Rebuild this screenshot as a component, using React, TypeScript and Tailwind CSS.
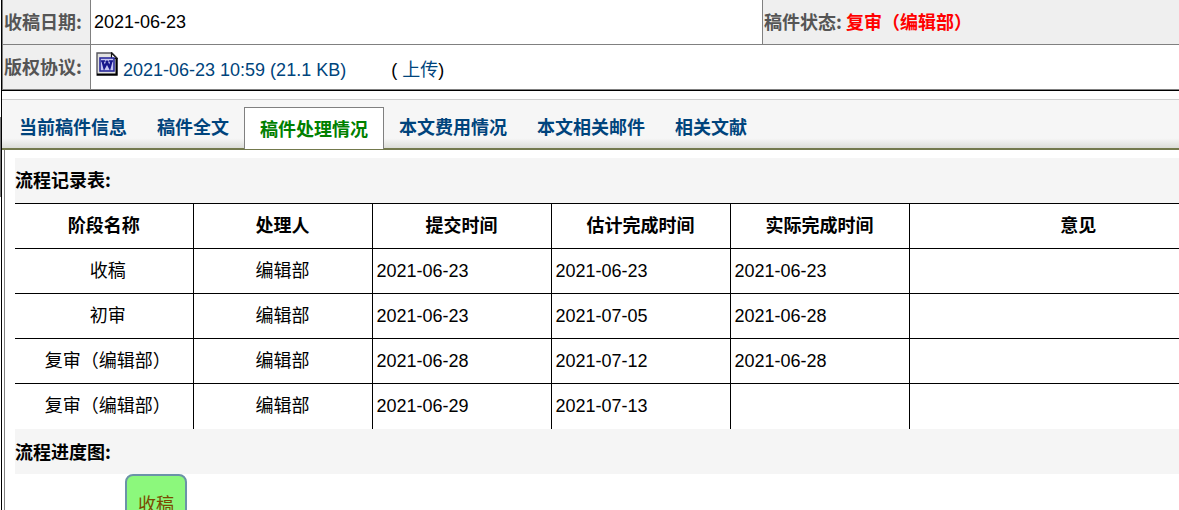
import { useState } from "react";
import clsx from "clsx";

const tabs = ["当前稿件信息", "稿件全文", "稿件处理情况", "本文费用情况", "本文相关邮件", "相关文献"];

const columns = ["阶段名称", "处理人", "提交时间", "估计完成时间", "实际完成时间", "意见"];

const records = [
  { stage: "收稿", handler: "编辑部", submitted: "2021-06-23", estimated: "2021-06-23", finished: "2021-06-23" },
  { stage: "初审", handler: "编辑部", submitted: "2021-06-23", estimated: "2021-07-05", finished: "2021-06-28" },
  { stage: "复审（编辑部）", handler: "编辑部", submitted: "2021-06-28", estimated: "2021-07-12", finished: "2021-06-28" },
  { stage: "复审（编辑部）", handler: "编辑部", submitted: "2021-06-29", estimated: "2021-07-13", finished: "" },
];

function WordIcon() {
  return (
    <svg className="w-[22px] h-6 shrink-0" viewBox="0 0 22 24" aria-hidden="true">
      <path d="M1 1h15l5 5v17H1z" fill="#e2e2e2" stroke="#55555c" strokeWidth="1.4" />
      <path d="M20.500 6v16.500H1" fill="none" stroke="#000" strokeWidth="2" />
      <path d="M15.500 1v5.500H21z" fill="#fff" stroke="#111" strokeWidth="1.2" />
      <rect x="4" y="6" width="14" height="13" fill="#c6c6f2" stroke="#2a2a9c" strokeWidth="1.6" />
      <path d="M6.500 9l1.800 6.500L11 10.500l2.700 5L15.500 9" fill="none" stroke="#17178c" strokeWidth="2.4" />
      <path d="M5 9h4M9.500 9.500h3M13 9h4" stroke="#17178c" strokeWidth="1.6" />
    </svg>
  );
}

function SectionTitle({ children }: { children: string }) {
  return (
    <h2 className="h-[45px] flex items-center pb-[2px] bg-[#f5f5f5] font-['Noto_Sans_CJK_SC',sans-serif] font-bold">
      {children}
    </h2>
  );
}

function ManuscriptInfo() {
  const label =
    "w-[88px] pl-px pb-[2px] text-left bg-[#efefef] text-[#555] font-['Noto_Sans_CJK_SC',sans-serif] font-bold whitespace-nowrap";

  return (
    <div className="border-b border-black">
      <table className="w-full table-fixed border-collapse border-l border-b border-[#808080]">
        <tbody>
          <tr className="h-11 border-b border-[#808080]">
            <th scope="row" className={label}>收稿日期:</th>
            <td className="w-[672px] pl-[3px] border-x border-[#808080]">2021-06-23</td>
            <td className="pl-px pb-[2px] bg-[#efefef] text-[#555] font-['Noto_Sans_CJK_SC',sans-serif] font-bold whitespace-nowrap">
              稿件状态: <span className="text-[#f00]">复审（编辑部）</span>
            </td>
          </tr>
          <tr className="h-[45px]">
            <th scope="row" className={label}>版权协议:</th>
            <td colSpan={2} className="pl-[5px] border-l border-[#808080]">
              <div className="flex items-start">
                <WordIcon />
                <a href="#agreement" className="ml-[5px] mt-[6px] text-[#00447c]">
                  2021-06-23 10:59 (21.1 KB)
                </a>
                <span className="ml-[45px] mt-[6px]">
                  ( <a href="#upload" className="text-[#00447c]">上传</a>)
                </span>
              </div>
            </td>
          </tr>
        </tbody>
      </table>
    </div>
  );
}

function ProcessTable() {
  const cell = "border-l border-black";

  return (
    <table className="w-full table-fixed border-collapse">
      <thead>
        <tr className="h-[45px] border-t border-black">
          {columns.map((name, i) => (
            <th
              key={name}
              scope="col"
              className={clsx(
                "pb-1 font-['Noto_Sans_CJK_SC',sans-serif] font-bold",
                i > 0 && cell,
                i === 0 && "w-[178px]",
                i > 0 && i < 5 && "w-[179px]"
              )}
            >
              {name}
            </th>
          ))}
        </tr>
      </thead>
      <tbody>
        {records.map((r, i) => (
          <tr key={i} className="h-[45px] border-t border-black last:h-[46px]">
            <td className="pl-2 text-center">{r.stage}</td>
            <td className={clsx(cell, "text-center")}>{r.handler}</td>
            <td className={clsx(cell, "pl-1")}>{r.submitted}</td>
            <td className={clsx(cell, "pl-1")}>{r.estimated}</td>
            <td className={clsx(cell, "pl-1")}>{r.finished}</td>
            <td className={cell}></td>
          </tr>
        ))}
      </tbody>
    </table>
  );
}

export default function App() {
  const [active, setActive] = useState(2);

  return (
    <div className="relative h-screen overflow-hidden bg-white pl-px text-black text-[18px] leading-6 font-['Liberation_Sans','Noto_Sans_CJK_SC',sans-serif]">
      <div className="absolute left-0 top-[117px] w-px h-20 bg-[#777]" />
      <div className="min-h-full border-l border-black">
        <ManuscriptInfo />

        <nav className="mt-2 h-[51px] flex items-end border-t border-t-[#d0d0d0] border-b-2 border-b-[#73794d] pl-[2px] bg-[linear-gradient(to_bottom,#f6f6f6_80%,#dcddd8)]">
          {tabs.map((tab, i) => (
            <a
              key={tab}
              href="#tab"
              onClick={(e) => {
                e.preventDefault();
                setActive(i);
              }}
              className={clsx(
                "h-[42px] flex items-center px-[15px] pb-px font-['Noto_Sans_CJK_SC',sans-serif] font-bold whitespace-nowrap",
                active === i
                  ? "-mb-px border border-b-0 border-[#808080] bg-white text-[#008000]"
                  : "text-[#00447c]"
              )}
            >
              {tab}
            </a>
          ))}
        </nav>

        {/* the record table runs past the right edge of the window */}
        <main className="ml-[2px] w-[calc(100%+66px)] border-l border-[#808080] pl-[10px] pt-2">
          <SectionTitle>流程记录表:</SectionTitle>
          <ProcessTable />
          <SectionTitle>流程进度图:</SectionTitle>
          <div className="pl-[110px] h-screen">
            <div className="w-[62px] h-[62px] flex items-center justify-center rounded-lg border-2 border-[#6b93a8] bg-[#8cf87c] text-[#7a4a00]">
              收稿
            </div>
          </div>
        </main>
      </div>
    </div>
  );
}
